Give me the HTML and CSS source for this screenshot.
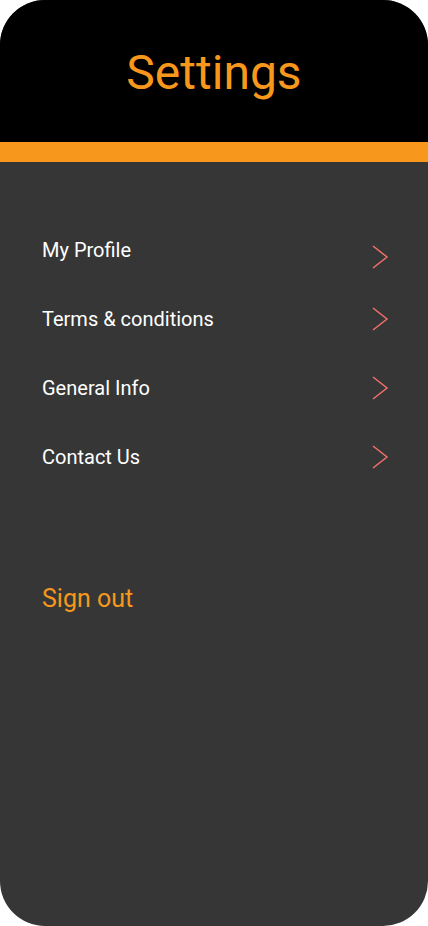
FILE: index.html
```html
<!DOCTYPE html>
<html lang="en">
<head>
<meta charset="utf-8">
<title>Settings</title>
<link rel="stylesheet" href="styles.css">
</head>
<body>
<div class="screen">
  <header class="header">
    <h1 class="title">Settings</h1>
  </header>
  <div class="accent"></div>
  <main class="content">
    <ul class="menu">
      <li class="menu-item"><span class="label">My Profile</span><svg class="chev chev-low" width="20" height="26" viewBox="0 0 20 26"><path d="M3 2 L17 13 L3 24" fill="none" stroke="#f0706a" stroke-width="1.5"/></svg></li>
      <li class="menu-item"><span class="label">Terms &amp; conditions</span><svg class="chev" width="20" height="26" viewBox="0 0 20 26"><path d="M3 2 L17 13 L3 24" fill="none" stroke="#f0706a" stroke-width="1.5"/></svg></li>
      <li class="menu-item"><span class="label">General Info</span><svg class="chev" width="20" height="26" viewBox="0 0 20 26"><path d="M3 2 L17 13 L3 24" fill="none" stroke="#f0706a" stroke-width="1.5"/></svg></li>
      <li class="menu-item"><span class="label">Contact Us</span><svg class="chev" width="20" height="26" viewBox="0 0 20 26"><path d="M3 2 L17 13 L3 24" fill="none" stroke="#f0706a" stroke-width="1.5"/></svg></li>
    </ul>
    <div class="signout">Sign out</div>
  </main>
</div>
</body>
</html>
```
FILE: styles.css
```css
* { box-sizing: border-box; }
html, body {
  margin: 0;
  padding: 0;
  background: #ffffff;
}
body {
  font-family: Roboto, "Noto Sans", sans-serif;
}
.screen {
  width: 428px;
  height: 926px;
  border-radius: 45px;
  overflow: hidden;
  background: #363636;
  display: flex;
  flex-direction: column;
}
.header {
  height: 142px;
  padding-top: 3px;
  background: #000000;
  display: flex;
  align-items: center;
  justify-content: center;
}
.title {
  margin: 0;
  font-weight: 400;
  font-size: 48px;
  line-height: 56px;
  color: #f7981d;
}
.accent {
  height: 20px;
  background: #f7981d;
}
.content {
  flex: 1;
  padding-top: 76px;
}
.menu {
  list-style: none;
  margin: 0;
  padding: 0;
}
.menu-item {
  height: 69px;
  display: flex;
  justify-content: space-between;
  align-items: flex-start;
  padding: 0 38px 0 42px;
}
.label {
  font-size: 20px;
  line-height: 24px;
  color: #ffffff;
}
.chev {
  display: block;
  margin-top: -1px;
}
.chev-low {
  margin-top: 6px;
}
.signout {
  margin-top: 71px;
  padding-left: 42px;
  font-size: 25px;
  line-height: 28px;
  color: #f7981d;
}
```
